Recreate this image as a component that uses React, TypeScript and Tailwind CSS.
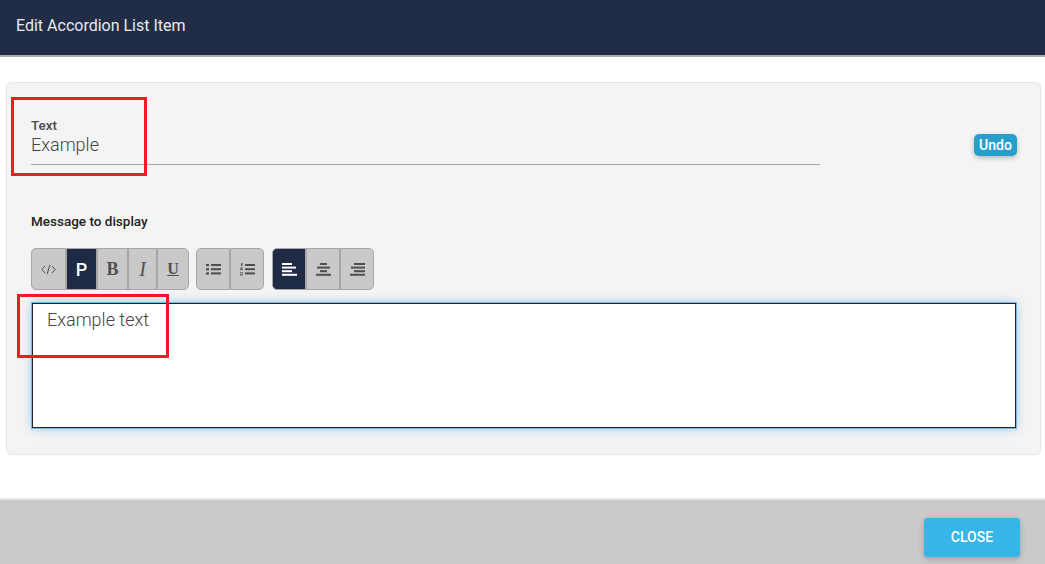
import React from "react";

const ToolBtn: React.FC<{ active?: boolean; className?: string; children: React.ReactNode }> = ({ active, className, children }) => (
    <button
        className={`h-[42px] flex items-center justify-center border border-[#a6a6a6] ${
            active ? "bg-[#1f2a44] text-white" : "bg-[#c9c9c9] text-[#4f4f4f]"
        } ${className}`}
    >
        {children}
    </button>
);

const Lines: React.FC<{ rows: number[][] }> = ({ rows }) => (
    <svg width="15" height="13" viewBox="0 0 15 13" fill="currentColor">
        {rows.map((r, i) => (
            <rect key={i} x={r[0]} y={r[1]} width={r[2]} height={r[3]} />
        ))}
    </svg>
);

const alignLeft = [[0, 0, 10, 2], [0, 3.6, 14, 2], [0, 7.2, 10, 2], [0, 10.8, 15, 2]];
const alignCenter = [[4, 0, 7, 2], [1, 3.6, 13, 2], [4, 7.2, 7, 2], [0, 10.8, 15, 2]];
const alignRight = [[4, 0, 11, 2], [1, 3.6, 14, 2], [4, 7.2, 11, 2], [0, 10.8, 15, 2]];

const App: React.FC = () => {
    return (
        <div className="relative w-[1045px] h-[564px] flex flex-col bg-white overflow-hidden font-['Roboto',sans-serif]">
            <header className="h-[57px] shrink-0 flex items-center pl-4 pb-[3px] bg-[#212c46] border-b-2 border-[#a9acb4] text-white/90 text-[16px]">
                Edit Accordion List Item
            </header>

            <div className="flex-1 pt-[25px] pl-[6px] pr-[4px]">
                <section className="h-[373px] rounded-[5px] border border-[#e6e6e6] bg-[#f4f4f4] pt-[35px] pl-[24px] pr-[23px]">
                    <div className="flex items-start justify-between">
                        <div className="w-[789px] h-[47px] border-b border-[#a8a8a8]">
                            <label className="block text-[13.5px] leading-[15px] font-medium text-[#4a4a4a]">Text</label>
                            <div className="text-[18px] leading-[24px] font-light text-[#444]">Example</div>
                        </div>
                        <button className="h-[22px] w-[43px] mt-[16px] rounded-[5px] bg-[#279fcd] text-white text-[14px] font-medium shadow-[0_2px_5px_rgba(0,0,0,0.25)]">
                            Undo
                        </button>
                    </div>

                    <div className="mt-[49px] text-[13.5px] leading-[15px] font-medium text-[#222]">Message to display</div>

                    <div className="mt-[19px] flex gap-[7px]">
                        <div className="flex">
                            <ToolBtn className="w-[35px] rounded-l-[5px]">
                                <svg width="15" height="11" viewBox="0 0 15 11" fill="none" stroke="currentColor" strokeWidth="1">
                                    <path d="M4 2 L0.8 5.5 L4 9 M11 2 L14.2 5.5 L11 9 M9 0.8 L6 10.2" />
                                </svg>
                            </ToolBtn>
                            <ToolBtn active className="w-[31px] text-[18px] font-medium border-[#6b7280]">P</ToolBtn>
                            <ToolBtn className="w-[31px] font-['Liberation_Serif',serif] font-bold text-[18px]">B</ToolBtn>
                            <ToolBtn className="w-[29px] font-['Liberation_Serif',serif] italic text-[20px]">I</ToolBtn>
                            <ToolBtn className="w-[32px] rounded-r-[5px] font-['Liberation_Serif',serif] underline text-[16px] font-bold">U</ToolBtn>
                        </div>
                        <div className="flex">
                            <ToolBtn className="w-[34px] rounded-l-[5px]">
                                <Lines rows={[[0, 1, 3, 2.2], [5, 1, 10, 2], [0, 5.2, 3, 2.2], [5, 5.2, 10, 2], [0, 9.4, 3, 2.2], [5, 9.4, 10, 2]]} />
                            </ToolBtn>
                            <ToolBtn className="w-[34px] rounded-r-[5px]">
                                <Lines rows={[[1, 0, 1.4, 3], [0, 4.6, 3, 1], [0, 6.2, 3, 1], [0, 9.4, 3, 1], [0, 11.4, 3, 1], [5, 1, 10, 2], [5, 5.2, 10, 2], [5, 9.4, 10, 2]]} />
                            </ToolBtn>
                        </div>
                        <div className="flex ml-px">
                            <ToolBtn active className="w-[34px] rounded-l-[5px]"><Lines rows={alignLeft} /></ToolBtn>
                            <ToolBtn className="w-[34px]"><Lines rows={alignCenter} /></ToolBtn>
                            <ToolBtn className="w-[34px] rounded-r-[5px]"><Lines rows={alignRight} /></ToolBtn>
                        </div>
                    </div>

                    <div className="mt-[13px] ml-px h-[125px] w-[984px] bg-white border border-[#1c2433] outline outline-1 outline-[#7fb4dc] shadow-[0_0_10px_rgba(90,160,220,0.6)] pl-[14px] pt-[3px] text-[18px] leading-[26px] font-light text-[#444]">
                        Example text
                    </div>
                </section>
            </div>

            <footer className="h-[66px] shrink-0 flex justify-end pr-[25px] pt-[18px] bg-[#cbcac8] border-t-2 border-[#e4e4e3]">
                <button className="w-[96px] h-[39px] rounded-[3px] bg-[#35b5e8] text-white text-[14px] font-medium shadow-[0_2px_6px_rgba(0,0,0,0.2)]">
                    CLOSE
                </button>
            </footer>

            {/* red annotation boxes */}
            <div className="absolute left-[11px] top-[97px] w-[136px] h-[79px] border-[3px] border-[#ed1c24]" />
            <div className="absolute left-[17px] top-[294px] w-[152px] h-[64px] border-[3px] border-[#ed1c24]" />
        </div>
    );
};

export default App;
